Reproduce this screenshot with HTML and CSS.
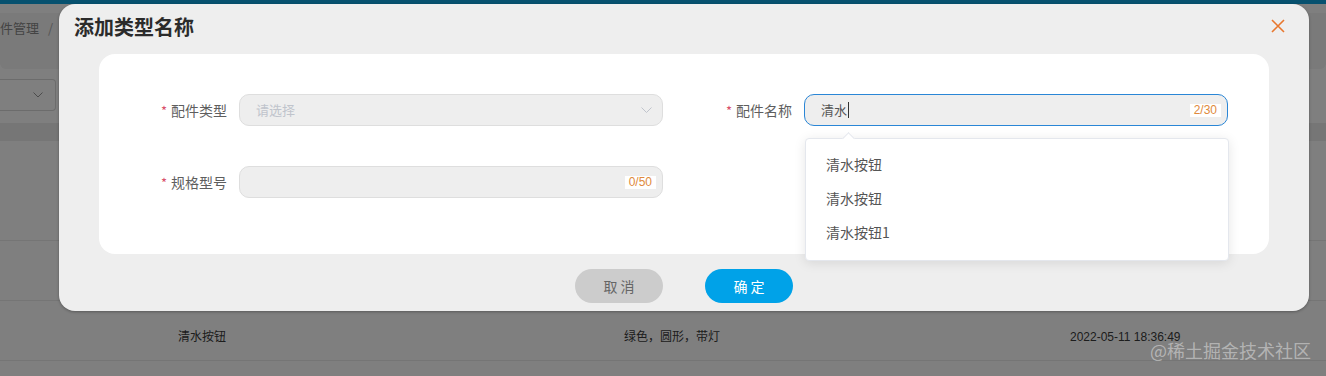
FILE: index.html
```html
<!DOCTYPE html>
<html lang="zh-CN">
<head>
<meta charset="utf-8">
<title>添加类型名称</title>
<link rel="stylesheet" href="styles.css">
</head>
<body>
<div class="page">
  <div class="topbar"></div>
  <div class="crumb-card"><span class="crumb">配件管理<span class="sep">/</span></span></div>
  <div class="filters">
    <div class="bg-select">
      <svg class="bg-chev" width="10" height="6" viewBox="0 0 10 6"><polyline points="0.5,0.5 5,5 9.5,0.5" fill="none" stroke="#999" stroke-width="1"/></svg>
    </div>
  </div>
  <div class="thead"></div>
  <div class="trow tall"></div>
  <div class="trow"></div>
  <div class="trow data">
    <span></span>
    <span>清水按钮</span>
    <span>绿色，圆形，带灯</span>
    <span>2022-05-11 18:36:49</span>
  </div>
  <div class="trow last"></div>
</div>

<div class="mask"></div>

<div class="dialog">
  <div class="dlg-head">
    <span class="dlg-title">添加类型名称</span>
    <svg class="dlg-close" width="14" height="14" viewBox="0 0 14 14"><path d="M1 1 L13 13 M13 1 L1 13" stroke="#e8772e" stroke-width="1.6" fill="none"/></svg>
  </div>
  <div class="dlg-card">
    <div class="form-row">
      <div class="form-item">
        <label class="form-label"><span class="req">*</span>配件类型</label>
        <div class="field">
          <span class="placeholder">请选择</span>
          <svg class="chev" width="11" height="6" viewBox="0 0 11 6"><polyline points="0.5,0.5 5.5,5.5 10.5,0.5" fill="none" stroke="#c0c4cc" stroke-width="1"/></svg>
        </div>
      </div>
      <div class="form-item">
        <label class="form-label"><span class="req">*</span>配件名称</label>
        <div class="field focus">
          <span class="value">清水</span><span class="caret"></span>
          <span class="count">2/30</span>
          <div class="suggest">
            <div class="suggest-arrow"></div>
            <div class="suggest-item">清水按钮</div>
            <div class="suggest-item">清水按钮</div>
            <div class="suggest-item">清水按钮1</div>
          </div>
        </div>
      </div>
    </div>
    <div class="form-row">
      <div class="form-item">
        <label class="form-label"><span class="req">*</span>规格型号</label>
        <div class="field">
          <span class="count">0/50</span>
        </div>
      </div>
    </div>
  </div>
  <div class="dlg-foot">
    <button class="btn cancel">取 消</button>
    <button class="btn ok">确 定</button>
  </div>
</div>

<div class="watermark">@稀土掘金技术社区</div>
</body>
</html>
```

FILE: styles.css
```css
* { box-sizing: border-box; }

html, body {
  margin: 0;
  padding: 0;
}

body {
  width: 1326px;
  height: 376px;
  overflow: hidden;
  position: relative;
  background: #ffffff;
  font-family: "Liberation Sans", "Noto Sans CJK SC", sans-serif;
  color: #333;
}

/* ---------- background page ---------- */
.page {
  display: flex;
  flex-direction: column;
  width: 1326px;
  height: 376px;
  overflow: hidden;
  background: #ffffff;
}

.topbar {
  height: 4px;
  background: #0fa3de;
  flex: none;
}

.crumb-card {
  flex: none;
  height: 56px;
  margin-top: 9px;
  background: #f4f4f4;
  border-radius: 0 0 6px 6px;
  padding-top: 5px;
}

.crumb {
  display: block;
  margin-left: -13px;
  font-size: 13px;
  line-height: 20px;
  color: #888;
  font-family: "Noto Sans CJK SC", sans-serif;
}

.sep {
  margin-left: 9px;
  color: #aaa;
}

.filters {
  flex: none;
  height: 54px;
  padding-top: 10px;
}

.bg-select {
  width: 56px;
  height: 32px;
  border: 1px solid #d8d8d8;
  border-left: none;
  border-radius: 0 4px 4px 0;
  display: flex;
  align-items: center;
  justify-content: flex-end;
  padding-right: 12px;
}

.thead {
  flex: none;
  height: 18px;
  background: #ececec;
}

.trow {
  flex: none;
  height: 60px;
  border-bottom: 1px solid #ebebeb;
}

.trow.tall {
  height: 100px;
}

.trow.last {
  height: 15px;
  border-bottom: none;
}

.trow.data {
  display: grid;
  grid-template-columns: 178px 446px 446px 1fr;
  align-items: end;
  padding-bottom: 15px;
  font-size: 12px;
  line-height: 16px;
  color: #3a3a3a;
}

.mask {
  position: absolute;
  inset: 0;
  background: rgba(0, 0, 0, 0.5);
}

/* ---------- dialog ---------- */
.dialog {
  position: absolute;
  left: 59px;
  top: 4px;
  width: 1250px;
  height: 307px;
  background: #eeeeee;
  border-radius: 16px;
  box-shadow: 0 1px 3px rgba(0, 0, 0, 0.3);
  display: flex;
  flex-direction: column;
}

.dlg-head {
  height: 46px;
  flex: none;
  display: flex;
  align-items: center;
  justify-content: space-between;
  padding: 0 24px 0 15px;
}

.dlg-title {
  font-size: 20px;
  font-weight: bold;
  color: #2b2b2b;
  line-height: 26px;
  font-family: "Noto Sans CJK SC", sans-serif;
}

.dlg-close {
  display: block;
  margin-top: -3px;
}

.dlg-card {
  flex: none;
  height: 200px;
  margin: 4px 40px 0;
  background: #ffffff;
  border-radius: 16px;
  padding-top: 40px;
  display: flex;
  flex-direction: column;
  gap: 40px;
}

.form-row {
  display: flex;
  gap: 1px;
}

.form-item {
  display: flex;
  align-items: center;
}

.form-label {
  width: 140px;
  text-align: right;
  padding-right: 12px;
  font-size: 14px;
  line-height: 20px;
  color: #5e5e5e;
  font-family: "Noto Sans CJK SC", sans-serif;
}

.req {
  color: #d9506a;
  margin-right: 4px;
  font-size: 13px;
}

.field {
  position: relative;
  width: 424px;
  height: 32px;
  background: #eeeeee;
  border: 1px solid #dedede;
  border-radius: 10px;
  display: flex;
  align-items: center;
  padding-left: 16px;
  padding-bottom: 1px;
  font-size: 13px;
  font-family: "Noto Sans CJK SC", sans-serif;
}

.field.focus {
  border-color: #2a86d6;
}

.placeholder {
  color: #c0c4cc;
}

.chev {
  margin-left: auto;
  margin-right: 10px;
  margin-top: 1px;
}

.value {
  color: #555;
}

.caret {
  width: 1px;
  height: 16px;
  background: #333;
  margin-left: 1px;
}

.count {
  position: absolute;
  right: 6px;
  top: 9px;
  background: #ffffff;
  color: #e08a3c;
  font-size: 12px;
  line-height: 13px;
  padding: 0 4px;
  font-family: "Liberation Sans", sans-serif;
}

/* ---------- suggestions popup ---------- */
.suggest {
  position: absolute;
  left: 0;
  top: 43px;
  width: 424px;
  padding: 8px 0 11px;
  background: #ffffff;
  border: 1px solid #e4e7ed;
  border-radius: 4px;
  box-shadow: 0 2px 12px rgba(0, 0, 0, 0.1);
  z-index: 5;
}

.suggest-arrow {
  position: absolute;
  left: 38px;
  top: -5px;
  width: 9px;
  height: 9px;
  background: #ffffff;
  border-top: 1px solid #e4e7ed;
  border-left: 1px solid #e4e7ed;
  transform: rotate(45deg);
}

.suggest-item {
  height: 34px;
  line-height: 34px;
  padding-left: 20px;
  font-size: 14px;
  color: #555;
  font-family: "Noto Sans CJK SC", sans-serif;
}

/* ---------- footer ---------- */
.dlg-foot {
  flex: 1;
  display: flex;
  justify-content: center;
  align-items: flex-start;
  gap: 42px;
  padding-top: 15px;
}

.btn {
  width: 88px;
  height: 34px;
  border: none;
  border-radius: 17px;
  font-size: 14px;
  font-family: "Noto Sans CJK SC", sans-serif;
  padding: 0;
}

.btn.cancel {
  background: #cccccc;
  color: #666;
}

.btn.ok {
  background: #00a2e8;
  color: #ffffff;
}

.watermark {
  position: absolute;
  left: 1150px;
  top: 338px;
  font-size: 18px;
  line-height: 24px;
  color: rgba(210, 210, 210, 0.65);
  font-family: "Noto Sans CJK SC", sans-serif;
}
```
